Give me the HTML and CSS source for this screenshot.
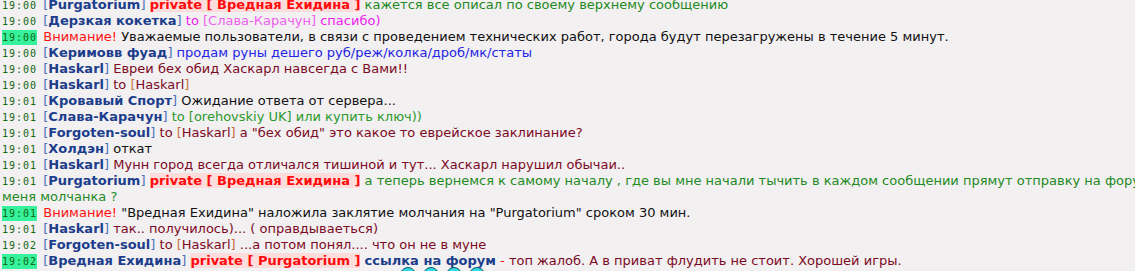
FILE: index.html
```html
<!DOCTYPE html>
<html lang="ru">
<head>
    <meta charset="UTF-8">
    <title>Чат</title>
    <link rel="stylesheet" href="styles.css">
</head>
<body>
    <div class="chat">
        <div class="msg"><span class="time">19:00</span> <span class="nick">[<b>Purgatorium</b>]</span> <span class="private">private [ Вредная Ехидина ]</span> <span class="green">кажется все описал по своему верхнему сообщению</span></div>
        <div class="msg"><span class="time">19:00</span> <span class="nick">[<b>Дерзкая кокетка</b>]</span> <span class="pink">to <span class="to">[Слава-Карачун]</span> спасибо)</span></div>
        <div class="msg"><span class="time sys">19:00</span> <span class="alert">Внимание!</span> Уважаемые пользователи, в связи с проведением технических работ, города будут перезагружены в течение 5 минут.</div>
        <div class="msg"><span class="time">19:00</span> <span class="nick">[<b>Керимовв фуад</b>]</span> <span class="blue">продам руны дешего руб/реж/колка/дроб/мк/статы</span></div>
        <div class="msg"><span class="time">19:00</span> <span class="nick">[<b>Haskarl</b>]</span> <span class="maroon">Евреи бех обид Хаскарл навсегда с Вами!!</span></div>
        <div class="msg"><span class="time">19:00</span> <span class="nick">[<b>Haskarl</b>]</span> <span class="maroon">to <span class="to">[<span class="maroon">Haskarl</span>]</span></span></div>
        <div class="msg"><span class="time">19:01</span> <span class="nick">[<b>Кровавый Спорт</b>]</span> Ожидание ответа от сервера...</div>
        <div class="msg"><span class="time">19:01</span> <span class="nick">[<b>Слава-Карачун</b>]</span> <span class="lime">to [orehovskiy UK] или купить ключ))</span></div>
        <div class="msg"><span class="time">19:01</span> <span class="nick">[<b>Forgoten-soul</b>]</span> <span class="maroon">to <span class="to">[<span class="maroon">Haskarl</span>]</span> а "бех обид" это какое то еврейское заклинание?</span></div>
        <div class="msg"><span class="time">19:01</span> <span class="nick">[<b>Холдэн</b>]</span> откат</div>
        <div class="msg"><span class="time">19:01</span> <span class="nick">[<b>Haskarl</b>]</span> <span class="maroon">Мунн город всегда отличался тишиной и тут... Хаскарл нарушил обычаи..</span></div>
        <div class="msg"><span class="time">19:01</span> <span class="nick">[<b>Purgatorium</b>]</span> <span class="private">private [ Вредная Ехидина ]</span> <span class="green">а теперь вернемся к самому началу , где вы мне начали тычить в каждом сообщении прямут отправку на форум<br>меня молчанка ?</span></div>
        <div class="msg"><span class="time sys">19:01</span> <span class="alert">Внимание!</span> "Вредная Ехидина" наложила заклятие молчания на "Purgatorium" сроком 30 мин.</div>
        <div class="msg"><span class="time">19:01</span> <span class="nick">[<b>Haskarl</b>]</span> <span class="maroon">так.. получилось)... ( оправдываеться)</span></div>
        <div class="msg"><span class="time">19:02</span> <span class="nick">[<b>Forgoten-soul</b>]</span> <span class="maroon">to <span class="to">[<span class="maroon">Haskarl</span>]</span> ...а потом понял.... что он не в муне</span></div>
        <div class="msg"><span class="time sys">19:02</span> <span class="nick">[<b>Вредная Ехидина</b>]</span> <span class="private">private [ Purgatorium ]</span> <span class="link">ссылка на форум</span> <span class="maroon"><span class="alert">-</span> топ жалоб. А в приват флудить не стоит. Хорошей игры.</span></div>
        <div class="smiles">
            <span class="smile"></span>
            <span class="smile"></span>
            <span class="smile"></span>
            <span class="smile"></span>
        </div>
    </div>
</body>
</html>
```

FILE: styles.css
```css
body {
    margin: 0;
    background: #f2f0f1;
    overflow: hidden;
}

.chat {
    margin-top: -3px;
    padding-left: 2px;
    font-family: 'DejaVu Sans', Verdana, sans-serif;
    font-size: 13px;
    line-height: 16px;
    color: #111111;
}

.msg {
    white-space: nowrap;
}

.time {
    display: inline-block;
    font-family: 'DejaVu Sans Mono', monospace;
    font-size: 10px;
    letter-spacing: 1px;
    line-height: 15px;
    color: #106810;
    margin-right: 2px;
}

.time.sys {
    background: #36f29c;
}

.nick {
    color: #4e72b8;
}

.nick b {
    color: #1c3d8c;
}

.private {
    font-weight: bold;
    color: #ff0a0a;
    background: #fddcdc;
}

.green { color: #1f8a1f; }
.lime { color: #2c9a2c; }
.pink { color: #f020f0; }
.pink .to { color: #f060f0; }
.blue { color: #2424e6; }
.maroon { color: #7d0a24; }
.to { color: #c8703c; }
.alert { color: #ff1010; }

.link {
    font-weight: bold;
    color: #1c3d8c;
}

.smiles {
    display: flex;
    gap: 7px;
    margin-top: -2px;
    padding-left: 398px;
}

.smile {
    width: 14px;
    height: 14px;
    border-radius: 50%;
    background: #34d8e4;
    border: 1px solid #0a5a66;
}
```
